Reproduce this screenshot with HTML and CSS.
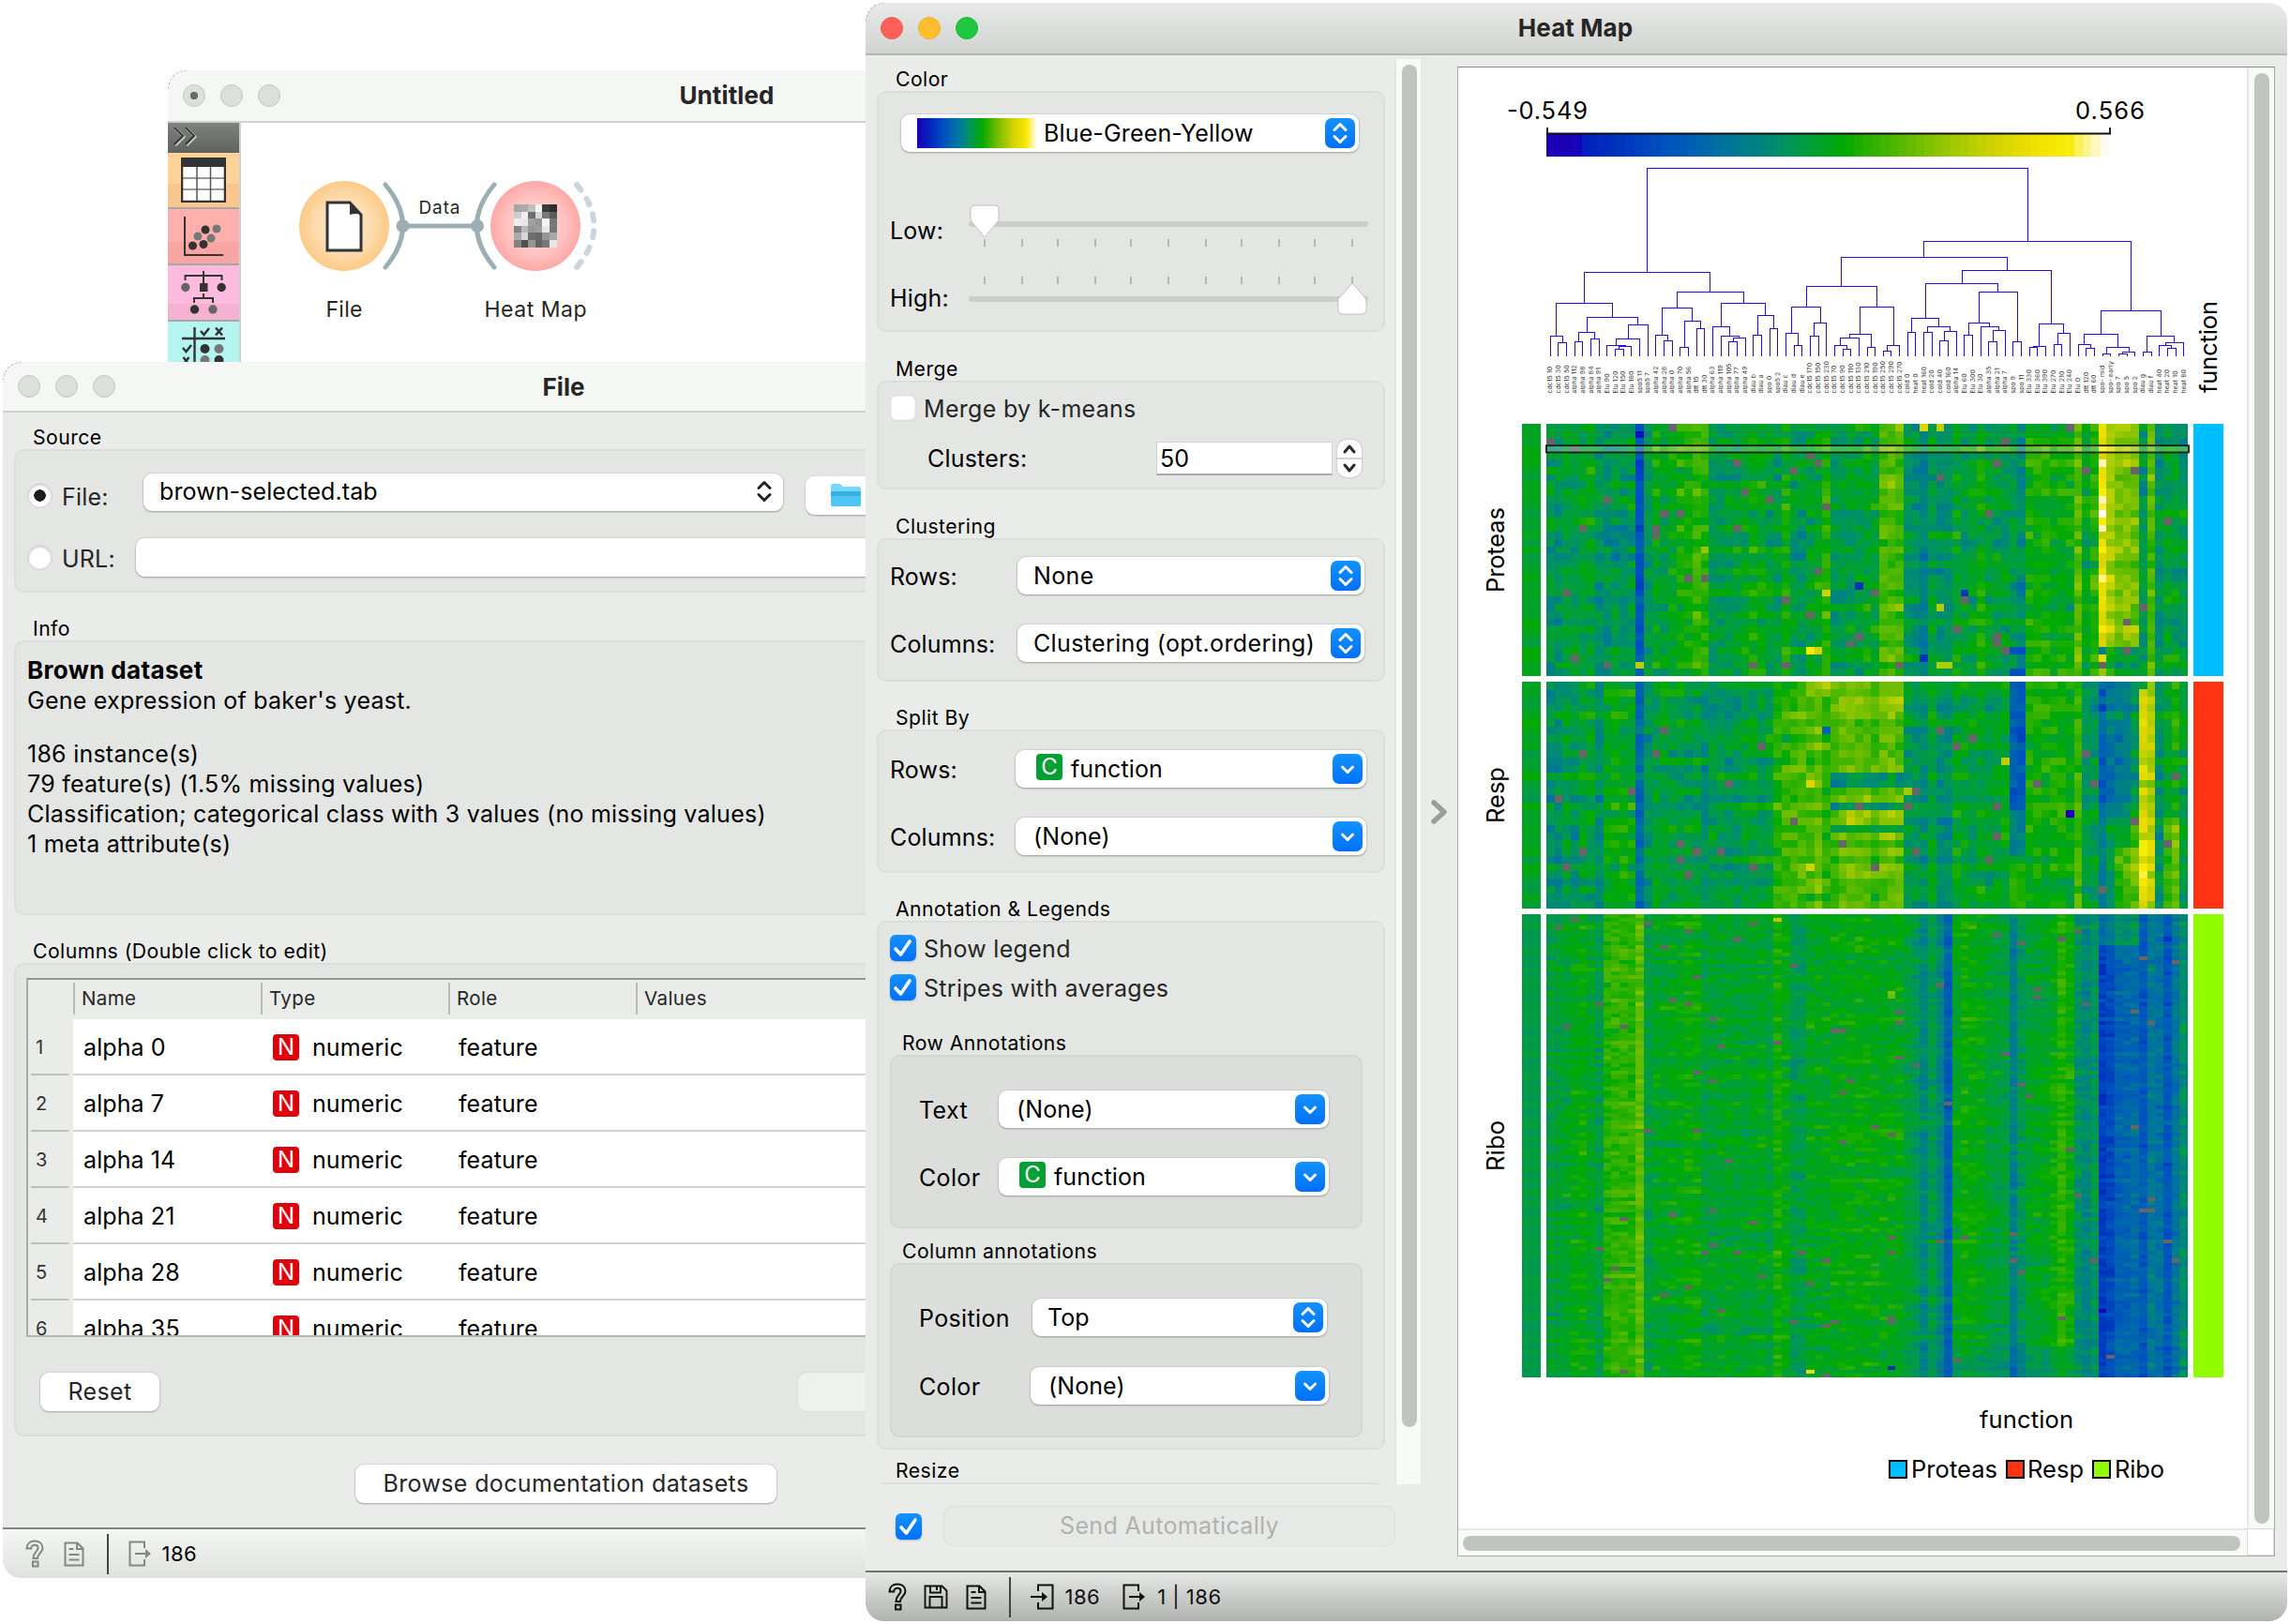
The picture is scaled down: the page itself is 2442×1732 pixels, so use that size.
FILE: index.html
```html
<!DOCTYPE html>
<html lang="en">
<head>
<meta charset="utf-8">
<title>Heat Map</title>
<link rel="stylesheet" href="styles.css">
</head>
<body>
<svg class="defs" width="0" height="0" aria-hidden="true">
  <symbol id="updown" viewBox="0 0 32 32"><path d="M10 12.5l6-6 6 6M10 19.5l6 6 6-6" fill="none" stroke="currentColor" stroke-width="3" stroke-linecap="round" stroke-linejoin="round"/></symbol>
  <symbol id="down" viewBox="0 0 32 32"><path d="M10.5 14l5.5 5.5 5.5-5.5" fill="none" stroke="currentColor" stroke-width="3" stroke-linecap="round" stroke-linejoin="round"/></symbol>
  <symbol id="check" viewBox="0 0 28 28"><path d="M6 15l5.500 6L21 7" fill="none" stroke="#fff" stroke-width="3.600" stroke-linecap="round" stroke-linejoin="round"/></symbol>
  <symbol id="help" viewBox="0 0 20 30"><path d="M1.500 9.500C1.500 4.500 5 1.500 10 1.500s8.500 3 8.500 7.500c0 5-5.500 5.500-5.500 11H8.500c0-6.500 5-7.500 5-11 0-2-1.500-3.200-3.500-3.200S6.200 7.200 6.200 9.500zM8 23.500h5.500v5H8z" fill="none" stroke="currentColor" stroke-width="2"/></symbol>
  <symbol id="save" viewBox="0 0 26 26"><path d="M1.500 1.500h18l5 5v18h-23zM7 1.500v7h11v-7M14 2v4M6.500 24v-11h13v11" fill="none" stroke="currentColor" stroke-width="1.900"/></symbol>
  <symbol id="doc" viewBox="0 0 22 27"><path d="M1.500 1.500h13l6 6v18h-19zM14 2v6h6M5.500 8h5M5.500 14h11M5.500 19.500h11" fill="none" stroke="currentColor" stroke-width="2"/></symbol>
  <symbol id="output" viewBox="0 0 25 28"><path d="M17 8V1.500H1.500v25H17V20M7 14h14" fill="none" stroke="currentColor" stroke-width="2"/><path d="M18 9l6 5-6 5z" fill="currentColor"/></symbol>
  <symbol id="input" viewBox="0 0 25 28"><path d="M8 8V1.500h15.500v25H8V20M0 14h14" fill="none" stroke="currentColor" stroke-width="2"/><path d="M12 9l6 5-6 5z" fill="currentColor"/></symbol>
</svg>

<div class="window canvas-win">
  <header class="titlebar"><i class="light edited"></i><i class="light"></i><i class="light"></i><h1>Untitled</h1></header>
  <div class="workspace">
    <nav class="toolbox">
      <div class="expander"><svg width="28" height="20"><path d="M2 1l9 9-9 9M14 1l9 9-9 9" fill="none" stroke="#c9cbc8" stroke-width="3"/><path d="M1 0l9 9-9 9M13 0l9 9-9 9" fill="none" stroke="#353735" stroke-width="2"/></svg></div>
      <div class="tool data"><svg width="48" height="48"><path d="M1 1h46v46H1z" fill="#fff"/><path d="M0 0h48v10H0z" fill="#333"/><path d="M1 22h46M1 34h46" stroke="#999" stroke-width="2"/><path d="M17 10v37M31.500 10v37" stroke="#555" stroke-width="1.500"/><path d="M1 1h46v46H1z" fill="none" stroke="#333" stroke-width="2.500"/></svg></div>
      <div class="tool visual"><svg width="48" height="48"><path d="M4 3v41h41" fill="none" stroke="#333" stroke-width="2"/><g fill="#333"><circle cx="26" cy="17" r="4.500"/><circle cx="12.500" cy="34" r="4.500"/><circle cx="24" cy="32.500" r="4.500"/></g><g fill="#777"><circle cx="38" cy="16" r="4.500"/><circle cx="18" cy="24" r="4.500"/><circle cx="32" cy="26" r="4.500"/></g></svg></div>
      <div class="tool model"><svg width="48" height="48"><path d="M24 1v13M4.500 11V6h39v5M24 25v5M14 35v-5h20v5" fill="none" stroke="#333" stroke-width="2"/><path d="M20 14h8.500v9H20z" fill="#333"/><circle cx="4.800" cy="18.500" r="4.700" fill="#666"/><circle cx="43.200" cy="18.500" r="4.700" fill="#333"/><circle cx="14.500" cy="42" r="4.700" fill="#333"/><circle cx="34" cy="42" r="4.700" fill="#666"/></svg></div>
      <div class="tool evaluate"><svg width="48" height="48"><path d="M14.500 1v46M1 13h46" stroke="#333" stroke-width="2.400"/><path d="M21 5l3.500 4 5.500-7M37 1.500l7 8M44 1.500l-7 8M2 23l3.500 4 5.500-7M2.500 33l6 8M8.500 33l-6 8" fill="none" stroke="#333" stroke-width="2.500"/><circle cx="25.500" cy="24" r="5" fill="#333"/><circle cx="40.500" cy="24" r="5" fill="#777"/><circle cx="25.500" cy="36" r="5" fill="#777"/><circle cx="40.500" cy="36" r="5" fill="#333"/></svg></div>
    </nav>
    <svg class="scheme" width="935" height="300" viewBox="257 131 935 300">
      <defs>
        <radialGradient id="gf"><stop offset="0" stop-color="#fdead0"/><stop offset=".6" stop-color="#fddcb0"/><stop offset="1" stop-color="#fcca86"/></radialGradient>
        <radialGradient id="gh"><stop offset="0" stop-color="#ffd9d9"/><stop offset=".6" stop-color="#ffc5c3"/><stop offset="1" stop-color="#fda9a7"/></radialGradient>
      </defs>
      <circle cx="367" cy="241" r="48" fill="url(#gf)"/><circle cx="571" cy="241" r="48" fill="url(#gh)"/>
      <path d="M411 197q37 44 0 88M527 197q-37 44 0 88M429 241h80" fill="none" stroke="#9aaeb4" stroke-width="5" stroke-linecap="round"/>
      <circle cx="429.500" cy="241" r="7" fill="#9aaeb4"/><circle cx="509" cy="241" r="7" fill="#9aaeb4"/>
      <path d="M615 197q37 44 0 88" fill="none" stroke="#c9d6db" stroke-width="6" stroke-linecap="round" stroke-dasharray="7 11"/>
      <path d="M349 216h24l12 13v38h-36z" fill="#fff" stroke="#333" stroke-width="3"/><path d="M373 215l13 14q-7-2-13 0z" fill="#333"/>
      <g id="mosaic" shape-rendering="crispEdges"></g>
      <text x="468.500" y="228" font-size="19" textLength="44">Data</text>
      <text x="367" y="338" font-size="23" textLength="39">File</text>
      <text x="571" y="338" font-size="23" textLength="109">Heat Map</text>
    </svg>
  </div>
</div>

<div class="window file-win">
  <header class="titlebar"><i class="light"></i><i class="light"></i><i class="light"></i><h1>File</h1></header>
  <main class="file-body">
    <h2 class="group-title">Source</h2>
    <section class="box source">
      <div class="field"><i class="radio on"></i><label>File:</label><div class="combo plain"><span>brown-selected.tab</span><svg class="arrows" width="32" height="32"><use href="#updown"/></svg></div>
        <div class="folder"><svg width="34" height="26"><path d="M1 3q0-2 2-2h8l3 3h17q2 0 2 2v17q0 2-2 2H3q-2 0-2-2z" fill="#76d6fb"/><path d="M1 9h32v14q0 2-2 2H3q-2 0-2-2z" fill="#4fc6f5"/><path d="M1 9h32v5H1z" fill="#39b1e0"/></svg></div></div>
      <div class="field"><i class="radio"></i><label>URL:</label><div class="url"></div></div>
    </section>
    <h2 class="group-title">Info</h2>
    <section class="box info"><b>Brown dataset</b><p>Gene expression of baker's yeast.</p><p class="gap">186 instance(s)</p><p>79 feature(s) (1.5% missing values)</p><p class="wide">Classification; categorical class with 3 values (no missing values)</p><p>1 meta attribute(s)</p></section>
    <h2 class="group-title">Columns (Double click to edit)</h2>
    <section class="box columns">
      <div class="table">
        <div class="tr head"><span></span><span>Name</span><span>Type</span><span>Role</span><span>Values</span></div>
        <div class="tr"><span><em>1</em></span><span>alpha 0</span><span><i class="tag n">N</i>numeric</span><span>feature</span><span></span></div>
        <div class="tr"><span><em>2</em></span><span>alpha 7</span><span><i class="tag n">N</i>numeric</span><span>feature</span><span></span></div>
        <div class="tr"><span><em>3</em></span><span>alpha 14</span><span><i class="tag n">N</i>numeric</span><span>feature</span><span></span></div>
        <div class="tr"><span><em>4</em></span><span>alpha 21</span><span><i class="tag n">N</i>numeric</span><span>feature</span><span></span></div>
        <div class="tr"><span><em>5</em></span><span>alpha 28</span><span><i class="tag n">N</i>numeric</span><span>feature</span><span></span></div>
        <div class="tr"><span><em>6</em></span><span>alpha 35</span><span><i class="tag n">N</i>numeric</span><span>feature</span><span></span></div>
      </div>
      <div class="buttons"><div class="btn reset">Reset</div><div class="btn apply"></div></div>
    </section>
    <div class="btn browse">Browse documentation datasets</div>
  </main>
  <footer class="status light-bar"><svg class="i-help" width="20" height="30"><use href="#help"/></svg><svg class="i-doc" width="22" height="27"><use href="#doc"/></svg><i class="rule"></i><svg class="i-io" width="25" height="28"><use href="#output"/></svg><span>186</span></footer>
</div>

<div class="window heat-win">
  <header class="titlebar"><i class="light red"></i><i class="light amber"></i><i class="light green"></i><h1>Heat Map</h1></header>
  <main class="heat-body">
    <div class="side">
      <div class="scroll">
        <div class="controls">
          <h2 class="group-title">Color</h2>
          <section class="box color-box">
            <div class="combo palette"><i class="ramp"></i><span>Blue-Green-Yellow</span><svg class="knob" width="32" height="32"><use href="#updown"/></svg></div>
            <div class="slider low"><label>Low:</label><svg id="low" width="430" height="50"></svg></div>
            <div class="slider high"><label>High:</label><svg id="high" width="430" height="50"></svg></div>
          </section>
          <h2 class="group-title t26">Merge</h2>
          <section class="box merge-box">
            <div class="tick-row"><i class="checkbox"></i><span>Merge by k-means</span></div>
            <div class="spin-row"><label>Clusters:</label><div class="spin">50</div><div class="stepper"><svg width="26" height="40"><path d="M0 20h26" stroke="#d2d4d2" stroke-width="2"/><path d="M8 13l5-6 5 6M8 27l5 6 5-6" fill="none" stroke="#2a2a2a" stroke-width="3" stroke-linecap="round" stroke-linejoin="round"/></svg></div></div>
          </section>
          <h2 class="group-title t26">Clustering</h2>
          <section class="box rows-box clus">
            <div class="row"><label>Rows:</label><div class="combo"><span>None</span><svg class="knob" width="32" height="32"><use href="#updown"/></svg></div></div>
            <div class="row"><label>Columns:</label><div class="combo"><span>Clustering (opt.ordering)</span><svg class="knob" width="32" height="32"><use href="#updown"/></svg></div></div>
          </section>
          <h2 class="group-title t25">Split By</h2>
          <section class="box rows-box split">
            <div class="row"><label>Rows:</label><div class="combo"><i class="tag c">C</i><span>function</span><svg class="knob" width="32" height="32"><use href="#down"/></svg></div></div>
            <div class="row"><label>Columns:</label><div class="combo"><span>(None)</span><svg class="knob" width="32" height="32"><use href="#down"/></svg></div></div>
          </section>
          <h2 class="group-title t25">Annotation &amp; Legends</h2>
          <section class="box anno-box">
            <div class="tick-row"><i class="checkbox on"><svg width="28" height="28"><use href="#check"/></svg></i><span>Show legend</span></div>
            <div class="tick-row second"><i class="checkbox on"><svg width="28" height="28"><use href="#check"/></svg></i><span>Stripes with averages</span></div>
            <h3 class="group-title">Row Annotations</h3>
            <section class="box sub rowsub">
              <div class="row"><label>Text</label><div class="combo"><span>(None)</span><svg class="knob" width="32" height="32"><use href="#down"/></svg></div></div>
              <div class="row"><label>Color</label><div class="combo"><i class="tag c">C</i><span>function</span><svg class="knob" width="32" height="32"><use href="#down"/></svg></div></div>
            </section>
            <h3 class="group-title t11">Column annotations</h3>
            <section class="box sub colsub">
              <div class="row"><label>Position</label><div class="combo top"><span>Top</span><svg class="knob" width="32" height="32"><use href="#updown"/></svg></div></div>
              <div class="row"><label>Color</label><div class="combo"><span>(None)</span><svg class="knob" width="32" height="32"><use href="#down"/></svg></div></div>
            </section>
          </section>
          <h2 class="group-title t9">Resize</h2>
          <section class="box"></section>
        </div>
        <div class="vbar"><i></i></div>
      </div>
      <div class="send"><i class="checkbox on"><svg width="28" height="28"><use href="#check"/></svg></i><div class="btn auto">Send Automatically</div></div>
    </div>
    <div class="handle"><svg width="22" height="32"><path d="M4 6l11 10L4 26" fill="none" stroke="#9b9d9b" stroke-width="5.500" stroke-linecap="round" stroke-linejoin="round"/></svg></div>
    <div class="view">
      <svg id="plot" width="841" height="1558" viewBox="1555 72 841 1558">
        <defs><linearGradient id="ramp"></linearGradient></defs>
        <text x="1607" y="127" textLength="86">-0.549</text><text x="2213" y="127" textLength="74">0.566</text>
        <rect x="1649" y="143" width="600" height="24" fill="url(#ramp)"/>
        <path d="M1650 136v7M2250 136v7M1649 142.500h602" fill="none" stroke="#111" stroke-width="1.800"/>
        <path id="tree" fill="none" stroke="#2b06e6" stroke-width="1" shape-rendering="crispEdges"/>
        <g id="names"></g>
        <g id="cells" shape-rendering="crispEdges"></g>
        <rect x="1649" y="475" width="684" height="7" fill="#fff" opacity=".25"/>
        <rect x="1649" y="475.200" width="685" height="7.300" fill="none" stroke="#12200a" stroke-width="1.800"/>
        <g shape-rendering="crispEdges"><rect x="2339" y="452" width="32" height="269" fill="#00bfff"/><rect x="2339" y="727" width="32" height="242" fill="#ff3214"/><rect x="2339" y="975" width="32" height="494" fill="#91fb00"/></g>
        <text transform="translate(2364 419) rotate(-90)" textLength="98">function</text>
        <text transform="translate(1604 632) rotate(-90)" textLength="91">Proteas</text>
        <text transform="translate(1604 878) rotate(-90)" textLength="60">Resp</text>
        <text transform="translate(1604 1249) rotate(-90)" textLength="54">Ribo</text>
        <text x="2111" y="1523" textLength="100">function</text>
        <g stroke="#000" stroke-width="2"><rect x="2015" y="1558" width="18" height="18" fill="#00bfff"/><rect x="2140" y="1558" width="18" height="18" fill="#ff3214"/><rect x="2232" y="1558" width="18" height="18" fill="#91fb00"/></g>
        <text x="2038" y="1576" textLength="92">Proteas</text><text x="2162" y="1576" textLength="60">Resp</text><text x="2255" y="1576" textLength="53">Ribo</text>
      </svg>
      <div class="vbar"><i></i></div>
      <div class="hbar"><i></i></div>
      <div class="corner"></div>
    </div>
  </main>
  <footer class="status dark-bar"><svg class="i-help" width="20" height="30"><use href="#help"/></svg><svg class="i-save" width="26" height="26"><use href="#save"/></svg><svg class="i-doc" width="22" height="27"><use href="#doc"/></svg><i class="rule"></i><svg class="i-in" width="25" height="28"><use href="#input"/></svg><span>186</span><svg class="i-out" width="25" height="28"><use href="#output"/></svg><span>1 | 186</span></footer>
</div>
<script src="plot.js"></script>
</body>
</html>
```
FILE: styles.css
```css
* { box-sizing: border-box; }
body { margin: 0; width: 2442px; height: 1732px; position: relative; overflow: hidden; background: #fff; font-family: Inter, "Liberation Sans", sans-serif; font-size: 25px; color: #000; }
h1, h2, h3, p { margin: 0; font-weight: inherit; }
i, em { font-style: normal; display: block; flex: none; }
svg { display: block; flex: none; }
.defs { position: absolute; }

.window { position: absolute; overflow: hidden; display: flex; flex-direction: column; background: #eaece9; border-radius: 20px; }
.window::before { content: ""; position: absolute; z-index: 1; left: 0; top: 0; width: 18px; height: 18px; border: 1px dashed #ff5a9e; border-right: 0; border-bottom: 0; border-top-left-radius: 20px; }
.canvas-win { left: 179px; top: 75px; width: 1192px; height: 340px; border-radius: 20px 20px 0 0; }
.file-win { left: 3px; top: 386px; width: 1196px; height: 1297px; }
.heat-win { left: 923px; top: 3px; width: 1516px; height: 1726px; }

.titlebar { height: 56px; flex: none; display: flex; align-items: center; gap: 16px; padding-left: 16px; background: #f5f7f4; border-bottom: 2px solid #cfd1ce; position: relative; }
.file-win .titlebar { height: 54px; }
.titlebar h1 { position: absolute; inset: 0; line-height: 53px; text-align: center; font-size: 26px; font-weight: 700; color: #262626; letter-spacing: .1px; }
.heat-win .titlebar { background: linear-gradient(#e8eae7, #d1d3d0); border-color: #b4b6b3; }
.heat-win .titlebar h1 { right: 2px; }
.light { width: 24px; height: 24px; border-radius: 50%; background: #dddfdc; border: 1px solid #c3c5c2; }
.edited { background: radial-gradient(circle, #6a6c6a 4px, #dddfdc 4.500px); }
.red { background: #ff5f57; border-color: #ef5a52; }
.amber { background: #febc2e; border-color: #efb12b; }
.green { background: #20c840; border-color: #1cb43a; }

.workspace { display: flex; flex: 1; background: #fff; }
.toolbox { width: 78px; flex: none; border-right: 2px solid #d0d2d0; }
.expander { height: 32px; padding: 5px 6px; background: linear-gradient(#7f827f, #60625f); }
.tool { height: 60px; padding: 5px 14px; border-bottom: 2px solid #a5a9a5; }
.data { background: linear-gradient(#ffd297 57%, #f8c58c 57%); }
.visual { background: linear-gradient(#ffb0ad 60%, #f9a5a3 60%); }
.model { background: linear-gradient(#ffbbde 70%, #f5b1d2 70%); }
.evaluate { background: #b4f5f1; }
.scheme text { text-anchor: middle; fill: #262626; }

.group-title { height: 26px; line-height: 26px; font-size: 21.200px; padding-left: 20px; letter-spacing: .45px; }
.t26 { margin-top: 26px; }
.t25 { margin-top: 25px; }
.t11 { margin-top: 11px; }
.t9 { margin-top: 9px; }
.box { background: #e4e6e3; border: 2px solid #dcdedb; border-radius: 10px; }
.sub { background: #dcdedb; border-color: #d4d6d3; }

.file-body { flex: 1; padding: 13px 0 0 12px; }
.source { height: 153px; padding: 25px 0 0 12px; }
.field { display: flex; align-items: center; height: 44px; }
.field + .field { margin-top: 22px; }
.field label { width: 78px; margin-left: 10px; color: #262626; padding-top: 3px; letter-spacing: .2px; }
.radio { width: 27px; height: 27px; border-radius: 50%; background: #fff; border: 1px solid #cfd1ce; box-shadow: inset 0 1px 3px #bbb; }
.radio.on { background: radial-gradient(circle, #1d1d1d 6px, #fff 6.500px); }
.combo { display: flex; align-items: center; height: 40px; background: #fff; border-radius: 9px; box-shadow: 0 0 2px #aeb0ad, 0 1px 2px #9a9c99; padding: 0 4px 1px 17px; }
.combo span { letter-spacing: .1px; white-space: nowrap; }
.combo .knob { margin-left: auto; color: #fff; background: linear-gradient(#1492ff, #0070fb); border-radius: 7px; }
.plain { width: 682px; margin: -7px 0 0 9px; }
.plain .arrows { margin-left: auto; color: #222; }
.folder { margin: 0 0 0 24px; width: 80px; height: 41px; border-radius: 9px; background: #fff; box-shadow: 0 1px 2px #9a9c99; padding: 7px 26px; }
.url { width: 900px; height: 41px; margin-left: 1px; background: #fff; border-radius: 9px; box-shadow: 0 0 2px #aeb0ad, 0 1px 2px #9a9c99; }
.source + .group-title { margin-top: 25px; }
.info { height: 293px; padding: 14px 12px; line-height: 32.300px; letter-spacing: .24px; }
.info .gap { margin-top: 24px; }
.info b { display: block; font-size: 26px; letter-spacing: .35px; }
.info + .group-title { margin-top: 25px; }
.columns { height: 505px; padding: 14px 0 0 11px; }
.table { height: 383px; overflow: hidden; background: #fff; border: 2px solid #a9aba8; border-right: 0; border-color: #949693 #a9aba8 #b4b6b3; }
.tr { height: 60px; display: grid; grid-template-columns: 48px 200px 200px 200px 1fr; }
.tr > span { display: flex; align-items: center; padding: 2px 0 0 11px; border-bottom: 2px solid #d2d4d1; letter-spacing: .1px; }
.tr > span:first-child { background: #eaece9; border: 0; padding: 0 5px 0 3px; }
.tr em { width: 40px; height: 60px; line-height: 60px; padding-left: 5px; border-bottom: 2px solid #bcbebb; font-size: 20px; color: #333; }
.tr.head { height: 42px; background: #eaece9; font-size: 20.500px; color: #262626; }
.tr.head > span { border: 0; height: 34px; margin-top: 3px; border-left: 2px solid #bbbdba; padding: 0 0 2px 7px; letter-spacing: .4px; }
.tr.head > span:first-child { border: 0; }
.tag { width: 28px; height: 28px; line-height: 28px; border-radius: 4px; color: #fff; text-align: center; font-size: 24px; }
.n { background: #e0000b; margin: 0 14px 0 2px; }
.c { background: #00a032; margin: -4px 9px 0 3px; }
.buttons { display: flex; padding: 38px 0 0 15px; }
.btn { height: 41px; line-height: 40px; text-align: center; background: #fff; border-radius: 9px; box-shadow: 0 0 2px #b4b6b3, 0 1px 2px #a4a6a3; color: #262626; letter-spacing: .35px; }
.reset { width: 127px; }
.apply { width: 200px; margin-left: 681px; background: #eff1ee; box-shadow: 0 0 2px #cccecb; }
.browse { width: 449px; margin: 30px 0 0 364px; }
.status { height: 54px; flex: none; display: flex; align-items: center; font-size: 22px; letter-spacing: .5px; padding-left: 24px; border-top: 2px solid #80827f; }
.light-bar { background: linear-gradient(#f5f7f4, #dfe1de); color: #000; }
.light-bar svg { color: #858784; }
.light-bar .i-doc { margin-left: 21px; }
.light-bar .i-io { margin: 0 11px 0 21px; }
.rule { width: 1.500px; height: 43px; background: #444; margin-left: 24px; }

.heat-body { flex: 1; display: flex; position: relative; }
.side { width: 592px; padding-top: 4px; }
.scroll { height: 1520px; display: flex; overflow: hidden; }
.controls { width: 566px; padding: 8px 0 0 12px; border-right: 2px solid #e3e5e2; }
.controls > .box { width: 542px; }
.controls > .box:last-child { height: 60px; }
.vbar { background: #f8faf7; padding: 6px; }
.scroll .vbar { width: 26px; }
.vbar i { width: 16px; height: 1453px; border-radius: 8px; background: #c1c3c0; }
.color-box { height: 257px; padding: 23px 0 0 12px; }
.palette { width: 488px; margin-left: 12px; }
.palette span { letter-spacing: .15px; }
.ramp { width: 128px; height: 32px; margin-right: 7px; background: linear-gradient(90deg, #1c00b8, #0032be 14%, #0050be 22%, #0078a0 35%, #009164 43%, #00aa00 54%, #6eba00 66%, #d2d200 80%, #fae800 91%, #fff8d0 98%, #fff); }
.slider { display: flex; height: 50px; }
.slider label { width: 84px; line-height: 30px; letter-spacing: .2px; }
.low { margin-top: 53px; }
.low label { padding-top: 16px; }
.high { margin-top: 28px; }
.high label { padding-top: 10px; }
.merge-box { height: 116px; padding: 13px 0 0 12px; }
.tick-row { display: flex; align-items: center; height: 28px; color: #262626; }
.tick-row span { padding: 1px 0 0 8px; letter-spacing: .3px; }
.checkbox { width: 28px; height: 28px; border-radius: 6px; background: #fff; box-shadow: inset 0 0 3px #a4a6a3; }
.checkbox.on { background: linear-gradient(#1492ff, #0070fb); box-shadow: 0 1px 2px #a9bcd0; }
.spin-row { display: flex; align-items: center; margin-top: 20px; height: 40px; }
.spin-row label { width: 243px; padding-left: 40px; letter-spacing: .2px; }
.spin-row .spin { width: 188px; height: 36px; line-height: 35px; margin-left: 41px; padding-left: 3px; background: #fff; border: 1px solid #cfd1ce; border-bottom: 2px solid #a9aba8; }
.stepper { margin-left: 5px; border-radius: 10px; background: #fff; box-shadow: 0 0 2px #999b98; }
.rows-box { height: 153px; padding: 18px 0 0 12px; }
.rows-box .row { margin-bottom: 32px; }
.row { display: flex; align-items: center; height: 40px; }
.row label { width: 136px; padding-top: 2px; letter-spacing: .15px; }
.row .combo { width: 370px; }
.clus .combo span { letter-spacing: .36px; }
.split { padding-top: 20px; }
.split .row label { width: 134px; }
.split .row .combo { width: 374px; padding-left: 19px; }
.anno-box { height: 564px; padding: 13px 0 0 12px; }
.second { margin-top: 14px; }
.anno-box h3 { padding-left: 13px; }
.second + h3 { margin-top: 32px; }
.sub { width: 504px; height: 185px; padding: 36px 0 0 29px; }
.sub .row + .row { margin-top: 32px; }
.sub .row label { width: 85px; letter-spacing: .35px; }
.sub .row .combo { width: 352px; padding-left: 19px; }
.colsub { height: 186px; }
.colsub .row label { width: 119px; }
.colsub .row .combo { width: 318px; }
.colsub .row .top { width: 314px; margin-left: 2px; padding-left: 16px; }
.colsub .row + .row { margin-top: 33px; }
.send { display: flex; align-items: center; padding: 24px 0 0 32px; }
.auto { width: 480px; margin-left: 24px; background: #e7e9e6; color: #b0b2af; box-shadow: 0 0 2px #c4c6c3; }
.handle { width: 39px; display: flex; align-items: center; padding: 0 0 0 10px; margin-bottom: 2px; }
.view { width: 872px; height: 1589px; margin-top: 12px; background: #fff; display: grid; grid-template: 1558px 29px / 841px 29px; border: 1px solid #a9aba8; border-top-color: #8b8d8a; }
.view .vbar { border-left: 2px solid #e6e8e5; padding: 6px 0 0 6px; }
.view .vbar i { height: 1547px; }
.hbar { background: #f8faf7; border-top: 2px solid #e6e8e5; padding: 6px 0 0 5px; }
.hbar i { width: 829px; height: 16px; border-radius: 8px; background: #c1c3c0; }
.corner { background: #fff; border: 1px solid #d8dad7; }
#plot text { font-size: 25.500px; }
#plot #names text { font-size: 6.800px; fill: #333; letter-spacing: .15px; }
.dark-bar { background: linear-gradient(#e6e8e5, #b0b2af); border-color: #70726f; color: #111; }
.dark-bar .i-save { margin-left: 18px; }
.dark-bar .i-doc { margin-left: 19px; }
.dark-bar .i-in { margin: 0 12px 0 21px; }
.dark-bar .i-out { margin: 0 12px 0 24px; }
```
FILE: plot.js
```js
const NS = 'http://www.w3.org/2000/svg';
const byId = id => document.getElementById(id);
const add = (parent, tag, attrs) => {
  const el = document.createElementNS(NS, tag);
  for (const k in attrs) el.setAttribute(k, attrs[k]);
  return parent.appendChild(el);
};

// Blue-Green-Yellow palette stops: position, r, g, b
const stops = [[0,28,0,184],[.045,26,0,184],[.06,0,32,190],[.12,0,50,190],[.2,0,80,192],[.27,0,100,175],[.33,0,120,150],[.38,0,132,126],[.42,0,146,98],[.46,0,158,62],[.5,0,165,30],[.53,0,170,0],[.57,40,176,0],[.65,100,187,0],[.7,140,197,0],[.75,176,205,0],[.8,210,210,0],[.85,230,220,0],[.9,245,230,0],[.935,248,236,10],[.95,255,240,80],[.98,255,245,180],[1,255,250,240]];
function color(v) {
  v = Math.max(0, Math.min(1, v));
  let i = 1;
  while (stops[i][0] < v) i++;
  const a = stops[i - 1], b = stops[i], t = (v - a[0]) / (b[0] - a[0]);
  return 'rgb(' + [1, 2, 3].map(k => Math.round(a[k] + (b[k] - a[k]) * t)).join() + ')';
}
for (let i = 0; i < 64; i++) {
  add(byId('ramp'), 'stop', { offset: i / 64, 'stop-color': color(i / 63) });
  add(byId('ramp'), 'stop', { offset: (i + 1) / 64, 'stop-color': color(i / 63) });
}

const X0 = 1649, CW = 684 / 79;
const cx = c => X0 + CW * (c + .5);

// Dendrogram: [height, left, right]; numbers are column indices
const tree = [28,
  [361,
    [460, [565, 0, [586, 1, 2]], [505, [553, [583, 3, 4], [574, 5, 6]], [529, [574, [595, 7, [598, [607, 8, 9], 10]], 11], 12]]],
    [424, [475, [562, 13, [580, 14, 15]], [517, [601, 16, 17], [541, 18, 19]]], [460, [535, 20, [565, 21, [571, [583, 22, 23], 24]]], [499, [562, 25, 26], [541, 27, 28]]]]],
  [262,
    [313,
      [406, [472, [556, 29, [595, 30, 31]], [523, [565, 32, 33], 34]], [472, [559, [571, [595, 35, [607, 36, 37]], 38], [601, 39, 40]], [595, [613, 41, 42], 43]]],
      [355,
        [397, [508, [553, 44, 45], [535, [553, 46, 47], [550, [580, 48, 49], 50]]], [424, [523, [562, 51, 52], [535, 53, [547, [583, 54, 55], 56]]], [583, 57, 58]]],
        [526, [598, [601, 59, 60], 61], [556, [592, 62, 63], 64]]]],
    [484, [559, [592, 65, [604, 66, 67]], [601, [622, 68, 69], [616, [622, 70, 71], 72]]], [565, [616, 73, 74], [586, [595, 75, [604, 76, 77]], 78]]]]];
let d = '';
const snap = x => Math.floor(x) + .5;
function walk(n) {
  if (typeof n === 'number') return [cx(n), 380];
  const y = Math.floor(170 + n[0] / 3) + .5, a = walk(n[1]), b = walk(n[2]);
  d += `M${snap(a[0])} ${a[1]}V${y}H${snap(b[0])}V${b[1]}`;
  return [(a[0] + b[0]) / 2, y];
}
walk(tree);
byId('tree').setAttribute('d', d);

const names = ('cdc15 10,cdc15 30,cdc15 50,alpha 112,alpha 98,alpha 84,alpha 91,Elu 90,Elu 120,Elu 150,Elu 180,spo5 11,spo5 7,alpha 42,alpha 28,alpha 0,alpha 70,alpha 56,dtt 15,dtt 30,alpha 63,alpha 119,alpha 105,alpha 77,alpha 49,diau b,diau a,spo 0,spo5 2,diau c,diau d,diau e,cdc15 170,cdc15 150,cdc15 230,cdc15 70,cdc15 90,cdc15 110,cdc15 130,cdc15 210,cdc15 190,cdc15 250,cdc15 290,cdc15 270,cold 0,heat 0,heat 160,cold 20,cold 40,cold 160,alpha 14,Elu 60,Elu 300,Elu 30,alpha 35,alpha 21,alpha 7,spo 9,spo 11,Elu 330,Elu 360,Elu 390,Elu 270,Elu 210,Elu 240,Elu 0,dtt 120,dtt 60,spo- mid,spo- early,spo 7,spo 5,spo 2,diau g,diau f,heat 40,heat 20,heat 10,heat 80').split(',');
names.forEach((n, c) => {
  add(byId('names'), 'text', { transform: `translate(${cx(c) + 2} 419.5) rotate(-90)` }).textContent = n;
});

let seed = 20117;
function rnd() {
  seed = (seed + 0x6D2B79F5) | 0;
  let t = Math.imul(seed ^ (seed >>> 15), 1 | seed);
  t = (t + Math.imul(t ^ (t >>> 7), 61 | t)) ^ t;
  return ((t ^ (t >>> 14)) >>> 0) / 4294967296;
}
const gauss = () => (rnd() + rnd() + rnd() + rnd() - 2) * 1.73;

// Column means in percent of the palette, one list per class
const proteas = [43,42,45,45,47,48,42,42,43,43,44,20,44,50,46,50,54,54,58,58,45,45,46,48,50,53,51,48,45,54,46,44,48,49,56,44,46,46,48,50,48,62,63,61,45,43,37,46,43,43,50,46,48,54,47,46,45,44,39,54,54,54,51,52,52,63,50,56,87,74,67,69,66,43,61,41,48,46,44];
const resp = [43,42,47,44,48,49,42,52,53,51,50,29,43,47,47,46,47,46,46,42,45,45,44,44,46,47,46,47,57,58,60,62,61,65,58,59,62,64,64,63,59,64,66,64,46,45,42,49,42,41,50,48,46,48,46,47,50,25,22,53,53,52,53,53,52,59,44,44,25,32,33,36,42,80,73,42,49,54,46];
const ribo = [46,47,48,51,52,49,45,56,58,58,57,64,46,49,49,50,51,52,52,47,48,49,49,48,48,49,50,47,54,51,45,45,50,50,50,51,52,52,52,52,51,51,51,51,47,44,38,45,38,25,50,53,52,51,48,47,47,35,44,49,50,50,53,57,53,42,38,43,15,19,26,27,29,23,33,31,22,32,40];
const blocks = [6,10,12,19,28,31,34,43,50,56,58,64,67,72,74,78];
const at = (s) => new Set(s.split(' '));
const groups = [
  { y: 452, h: 269, n: 35, mean: proteas, cell: .032, row: .025, miss: at('0,2 15,0 3,3 32,4 23,5 33,5 30,6 24,9 7,10 27,10 14,12 16,12 34,11 4,14 23,14 13,14 13,15 33,20 17,21 19,21 2,23 29,24 32,26 38,29 37,30 3,32 7,33 25,33 29,33 64,0 56,2 55,5 66,6 72,6 48,7 54,12 76,13 40,23 51,24 73,25 71,27 50,28 55,29 55,30 56,31 71,31 43,33 68,33') },
  { y: 727, h: 242, n: 30, mean: resp, cell: .03, row: .028, miss: at('14,6 26,8 4,9 13,9 22,13 10,14 1,15 38,16 30,18 16,21 36,21 4,22 18,22 21,22 16,23 2,24 25,24 17,25 48,6 52,7 50,8 66,9 77,12 60,13 67,13 45,14 44,16 55,16 72,18 55,20 76,21 45,22 54,23 40,24 68,27') },
  { y: 975, h: 494, n: 121, mean: ribo, cell: .022, row: .016, miss: null }
];
const fixed = [
  { '32,31': .92, '33,31': .8, '34,23': .8, '11,33': .76, '19,17': .72, '11,1': .06, '38,22': .12, '51,23': .15, '46,32': .13, '46,0': .82, '48,0': .76, '68,12': 1, '68,5': .985, '68,10': .975, '68,14': .975, '68,21': .96, '68,11': .95, '48,25': .75, '48,33': .75, '49,33': .75, '68,31': .36, '57,31': .22, '58,31': .2, '57,34': .2, '58,34': .2, '68,34': .72 },
  { '64,17': 0, '32,13': .82, '32,24': .81, '34,0': .76, '34,1': .68, '34,6': .27, '56,10': .76, '44,14': .74, '73,0': .46, '73,25': .94 },
  { '32,119': .86, '42,118': .1, '28,1': .75, '68,103': .02, '42,20': .68, '42,21': .66 }
];
function adjust(g, c, r, v) {
  if (g === 0) {
    if (r > 30 && c > 68 && c < 73) v -= .24;
    if (r === 3) v += .04;
  }
  if (g === 1) {
    if (c > 34 && c < 44 && (r === 12 || r === 13 || r === 16 || r === 19)) v -= .2;
    if (c > 34 && c < 44 && (r === 15 || r === 17)) v += .05;
    if (c === 57 || c === 58) v += r > 22 ? .3 : r > 16 ? .14 : 0;
    if (r > 21 && c > 69 && c < 73) v += .28;
    else if (r > 17 && c > 67 && c < 73) v += .13;
    if (r > 20 && c === 73) v += .09;
    if (r > 20 && c === 74) v += .08;
    if (r > 17 && (c === 76 || c === 77)) v += .12;
  }
  if (g === 2) {
    if (r < 8 && c > 67 && c < 73) v += .14;
    if (r > 112 && c > 49 && c < 65) v -= .06;
    if (r > 18 && r < 30 && c > 58 && c < 63) v -= .04;
  }
  return Math.min(v, .92);
}
const paths = {};
const put = (fill, x, y, x2, y2) => { paths[fill] = (paths[fill] || '') + `M${x} ${y}H${x2}V${y2}H${x}z`; };
groups.forEach((g, gi) => {
  for (let r = 0; r < g.n; r++) {
    const y = Math.round(g.y + g.h * r / g.n), y2 = Math.round(g.y + g.h * (r + 1) / g.n);
    const avg = gauss();
    put(color((gi === 2 ? .45 : .49) + avg * (gi === 2 ? .012 : .022)), 1623, y, 1643, y2);
    let b = -1, shift = 0;
    for (let c = 0; c < 79; c++) {
      if (b < 0 || c > blocks[b]) { b++; shift = gauss() * g.row; }
      let v = g.mean[c] / 100 + shift + gauss() * g.cell + avg * .006;
      v = adjust(gi, c, r, v);
      const key = c + ',' + r;
      if (fixed[gi][key] !== undefined) v = fixed[gi][key];
      const missing = g.miss ? g.miss.has(key) : rnd() < .0105;
      const q = Math.round(v * 56) / 56;
      put(missing ? '#666' : color(q), Math.round(X0 + CW * c), y, Math.round(X0 + CW * (c + 1)), y2);
    }
  }
});
for (const fill in paths) add(byId('cells'), 'path', { fill, d: paths[fill] });

// Threshold sliders
const ticks = [17, 57, 95, 135, 173, 213, 253, 291, 331, 369, 409];
function slider(id, trackY, tickY, thumb) {
  const s = byId(id);
  add(s, 'rect', { x: 0, y: trackY, width: 426, height: 6, rx: 3, fill: '#cccecb' });
  ticks.forEach(x => add(s, 'rect', { x: x - 1, y: tickY, width: 2, height: 8, fill: '#b4b6b3' }));
  add(s, 'path', { d: thumb, fill: '#fff', stroke: '#bfc1be', 'stroke-width': 1 });
}
slider('low', 21, 40, 'M6 4h22q4 0 4 4v12L17 38 2 20V8q0-4 4-4z');
slider('high', 23, 2, 'M409 9l15 17v12q0 4-4 4h-22q-4 0-4-4V26z');

// Grey mosaic inside the Heat Map node
const shades = [166,170,192,245,60,45, 205,240,110,215,120,90, 238,232,160,150,245,120, 130,185,150,160,230,118, 170,215,110,105,150,168, 130,80,150,100,120,230];
shades.forEach((s, i) => add(byId('mosaic'), 'rect', { x: 548 + (i % 6) * 7.6, y: 218 + Math.floor(i / 6) * 7.6, width: 8, height: 8, fill: `rgb(${s},${s},${s})` }));
```
